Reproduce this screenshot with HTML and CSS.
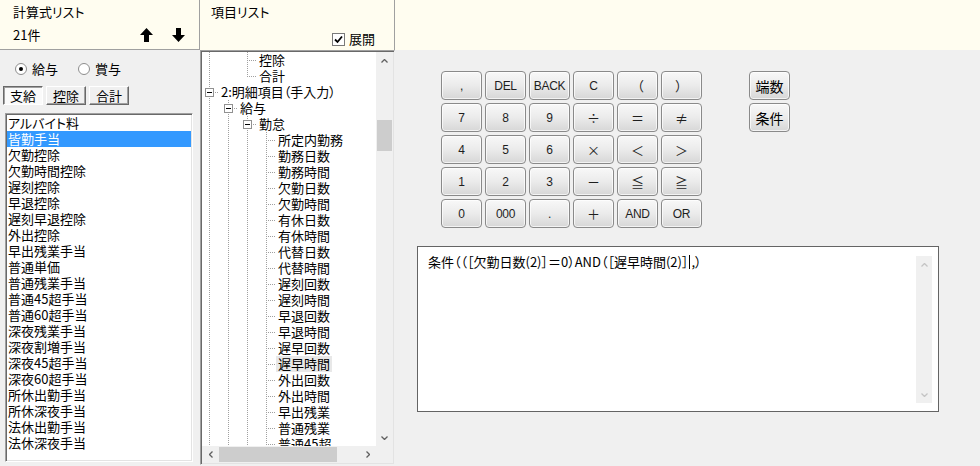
FILE: index.html
```html
<!DOCTYPE html>
<html lang="ja">
	<head>
		<meta charset="UTF-8">
		<title>計算式設定</title>
		<link rel="stylesheet" href="styles.css">
	</head>
	<body>
		<div class="app">
			<div class="hdr hdr-left">
				<div class="hdr-title">計算式リスト</div>
				<div class="hdr-row">
					<span>21件</span>
					<div class="arrows">
						<svg width="13" height="14" viewBox="0 0 13 14"><path d="M6.5 0 L13 7 L9 7 L9 14 L4 14 L4 7 L0 7 Z" fill="#000"/></svg>
						<svg width="13" height="14" viewBox="0 0 13 14"><path d="M6.5 14 L13 7 L9 7 L9 0 L4 0 L4 7 L0 7 Z" fill="#000"/></svg>
					</div>
				</div>
			</div>
			<div class="hdr hdr-mid">
				<div class="hdr-title">項目リスト</div>
				<div class="check-row">
					<label class="check">
						<span class="check-box">
							<svg width="9" height="9" viewBox="0 0 9 9"><path d="M1 4.5 L3.5 7 L8 1.5" fill="none" stroke="#000" stroke-width="1.8"/></svg>
						</span>
						展開
					</label>
				</div>
			</div>
			<div class="hdr hdr-right"></div>

			<div class="left-pane">
				<div class="radios">
					<span class="radio on"><span class="radio-dot"></span>給与</span>
					<span class="radio"><span class="radio-dot"></span>賞与</span>
				</div>
				<div class="tabs">
					<button class="tab pressed">支給</button>
					<button class="tab">控除</button>
					<button class="tab">合計</button>
				</div>
				<ul class="listbox">
					<li>アルバイト料</li>
					<li class="sel">皆勤手当</li>
					<li>欠勤控除</li>
					<li>欠勤時間控除</li>
					<li>遅刻控除</li>
					<li>早退控除</li>
					<li>遅刻早退控除</li>
					<li>外出控除</li>
					<li>早出残業手当</li>
					<li>普通単価</li>
					<li>普通残業手当</li>
					<li>普通45超手当</li>
					<li>普通60超手当</li>
					<li>深夜残業手当</li>
					<li>深夜割増手当</li>
					<li>深夜45超手当</li>
					<li>深夜60超手当</li>
					<li>所休出勤手当</li>
					<li>所休深夜手当</li>
					<li>法休出勤手当</li>
					<li>法休深夜手当</li>
				</ul>
			</div>

			<div class="tree">
				<div class="tree-view">
					<div class="node"><span class="ind v"></span><span class="ind"></span><span class="ind t"></span><span class="label">控除</span></div>
					<div class="node"><span class="ind v"></span><span class="ind"></span><span class="ind l"></span><span class="label">合計</span></div>
					<div class="node"><span class="ind t"><i class="box"></i></span><span class="label">2:明細項目（手入力）</span></div>
					<div class="node"><span class="ind v"></span><span class="ind t"><i class="box"></i></span><span class="label">給与</span></div>
					<div class="node"><span class="ind v"></span><span class="ind v"></span><span class="ind t"><i class="box"></i></span><span class="label">勤怠</span></div>
					<div class="node"><span class="ind v"></span><span class="ind v"></span><span class="ind v"></span><span class="ind t"></span><span class="label">所定内勤務</span></div>
					<div class="node"><span class="ind v"></span><span class="ind v"></span><span class="ind v"></span><span class="ind t"></span><span class="label">勤務日数</span></div>
					<div class="node"><span class="ind v"></span><span class="ind v"></span><span class="ind v"></span><span class="ind t"></span><span class="label">勤務時間</span></div>
					<div class="node"><span class="ind v"></span><span class="ind v"></span><span class="ind v"></span><span class="ind t"></span><span class="label">欠勤日数</span></div>
					<div class="node"><span class="ind v"></span><span class="ind v"></span><span class="ind v"></span><span class="ind t"></span><span class="label">欠勤時間</span></div>
					<div class="node"><span class="ind v"></span><span class="ind v"></span><span class="ind v"></span><span class="ind t"></span><span class="label">有休日数</span></div>
					<div class="node"><span class="ind v"></span><span class="ind v"></span><span class="ind v"></span><span class="ind t"></span><span class="label">有休時間</span></div>
					<div class="node"><span class="ind v"></span><span class="ind v"></span><span class="ind v"></span><span class="ind t"></span><span class="label">代替日数</span></div>
					<div class="node"><span class="ind v"></span><span class="ind v"></span><span class="ind v"></span><span class="ind t"></span><span class="label">代替時間</span></div>
					<div class="node"><span class="ind v"></span><span class="ind v"></span><span class="ind v"></span><span class="ind t"></span><span class="label">遅刻回数</span></div>
					<div class="node"><span class="ind v"></span><span class="ind v"></span><span class="ind v"></span><span class="ind t"></span><span class="label">遅刻時間</span></div>
					<div class="node"><span class="ind v"></span><span class="ind v"></span><span class="ind v"></span><span class="ind t"></span><span class="label">早退回数</span></div>
					<div class="node"><span class="ind v"></span><span class="ind v"></span><span class="ind v"></span><span class="ind t"></span><span class="label">早退時間</span></div>
					<div class="node"><span class="ind v"></span><span class="ind v"></span><span class="ind v"></span><span class="ind t"></span><span class="label">遅早回数</span></div>
					<div class="node"><span class="ind v"></span><span class="ind v"></span><span class="ind v"></span><span class="ind t"></span><span class="label current">遅早時間</span></div>
					<div class="node"><span class="ind v"></span><span class="ind v"></span><span class="ind v"></span><span class="ind t"></span><span class="label">外出回数</span></div>
					<div class="node"><span class="ind v"></span><span class="ind v"></span><span class="ind v"></span><span class="ind t"></span><span class="label">外出時間</span></div>
					<div class="node"><span class="ind v"></span><span class="ind v"></span><span class="ind v"></span><span class="ind t"></span><span class="label">早出残業</span></div>
					<div class="node"><span class="ind v"></span><span class="ind v"></span><span class="ind v"></span><span class="ind t"></span><span class="label">普通残業</span></div>
					<div class="node"><span class="ind v"></span><span class="ind v"></span><span class="ind v"></span><span class="ind t"></span><span class="label">普通45超</span></div>
				</div>
				<div class="vscroll">
					<span class="sb-btn"><svg width="7" height="4" viewBox="0 0 7 4"><path d="M0.5 3.5 L3.5 0.5 L6.5 3.5" fill="none" stroke="#606060" stroke-width="1.3"/></svg></span>
					<div class="sb-track"><div class="sb-thumb"></div></div>
					<span class="sb-btn"><svg width="7" height="4" viewBox="0 0 7 4"><path d="M0.5 0.5 L3.5 3.5 L6.5 0.5" fill="none" stroke="#606060" stroke-width="1.3"/></svg></span>
				</div>
				<div class="hscroll">
					<span class="sb-btn"><svg width="4" height="7" viewBox="0 0 4 7"><path d="M3.5 0.5 L0.5 3.5 L3.5 6.5" fill="none" stroke="#606060" stroke-width="1.3"/></svg></span>
					<div class="sb-track"><div class="sb-thumb"></div></div>
					<span class="sb-btn"><svg width="4" height="7" viewBox="0 0 4 7"><path d="M0.5 0.5 L3.5 3.5 L0.5 6.5" fill="none" stroke="#606060" stroke-width="1.3"/></svg></span>
				</div>
				<div class="corner"></div>
			</div>

			<div class="editor">
				<div class="keys-row">
					<div class="keypad">
						<button class="key">,</button>
						<button class="key">DEL</button>
						<button class="key">BACK</button>
						<button class="key">C</button>
						<button class="key sym">（</button>
						<button class="key sym">）</button>
						<button class="key">7</button>
						<button class="key">8</button>
						<button class="key">9</button>
						<button class="key sym">÷</button>
						<button class="key sym">＝</button>
						<button class="key sym">≠</button>
						<button class="key">4</button>
						<button class="key">5</button>
						<button class="key">6</button>
						<button class="key sym">×</button>
						<button class="key sym">＜</button>
						<button class="key sym">＞</button>
						<button class="key">1</button>
						<button class="key">2</button>
						<button class="key">3</button>
						<button class="key sym">－</button>
						<button class="key sym">≦</button>
						<button class="key sym">≧</button>
						<button class="key">0</button>
						<button class="key">000</button>
						<button class="key">.</button>
						<button class="key sym">＋</button>
						<button class="key">AND</button>
						<button class="key">OR</button>
					</div>
					<div class="side-keys">
						<button class="key jp">端数</button>
						<button class="key jp">条件</button>
					</div>
				</div>
				<div class="formula">
					<div class="formula-text">条件（（［欠勤日数(2)］＝0）AND（［遅早時間(2)］<span class="caret"></span>,）</div>
					<div class="formula-scroll">
						<svg width="7" height="4" viewBox="0 0 7 4"><path d="M0.5 3.5 L3.5 0.5 L6.5 3.5" fill="none" stroke="#c4c4c4" stroke-width="1.3"/></svg>
						<svg width="7" height="4" viewBox="0 0 7 4"><path d="M0.5 0.5 L3.5 3.5 L6.5 0.5" fill="none" stroke="#c4c4c4" stroke-width="1.3"/></svg>
					</div>
				</div>
			</div>
		</div>
	</body>
</html>
```

FILE: styles.css
```css
* {
	box-sizing: border-box;
}

body {
	margin: 0;
	width: 980px;
	height: 466px;
	overflow: hidden;
	background-color: #f0f0f0;
	color: #000;
	font-family: "Noto Sans CJK JP", "Liberation Sans", sans-serif;
	font-size: 13px;
	line-height: 16px;
	font-feature-settings: "palt";
}

.app {
	display: grid;
	grid-template-columns: 200px 195px 585px;
	grid-template-rows: 50px 416px;
}

/* header strip */
.hdr {
	background-color: #fffdf0;
}

.hdr-title {
	height: 16px;
}

.hdr-left {
	padding: 4px 14px 0 13px;
	border-right: 1px solid #a0a0a0;
	border-bottom: 1px solid #a0a0a0;
}

.hdr-row {
	display: flex;
	align-items: center;
	height: 16px;
	margin-top: 7px;
}

.arrows {
	display: flex;
	gap: 19px;
	margin-left: auto;
}

.hdr-mid {
	padding: 4px 19px 0 11px;
	border-right: 1px solid #a0a0a0;
}

.check-row {
	display: flex;
	justify-content: flex-end;
	margin-top: 11px;
}

.check {
	display: flex;
	align-items: center;
	gap: 4px;
}

.check-box {
	display: flex;
	align-items: center;
	justify-content: center;
	width: 13px;
	height: 13px;
	background-color: #fff;
	border: 1px solid #7a7a7a;
}

/* left column */
.left-pane {
	display: flex;
	flex-direction: column;
	padding-top: 11px;
}

.radios {
	display: flex;
	align-items: center;
	height: 16px;
	padding-left: 15px;
}

.radio {
	display: flex;
	align-items: center;
	gap: 5px;
}

.radio + .radio {
	margin-left: 20px;
}

.radio-dot {
	display: flex;
	align-items: center;
	justify-content: center;
	width: 12px;
	height: 12px;
	border-radius: 50%;
	border: 1px solid #8d8d8d;
	background-color: #fff;
}

.radio.on .radio-dot::after {
	content: "";
	width: 4px;
	height: 4px;
	border-radius: 50%;
	background-color: #000;
}

.tabs {
	display: flex;
	gap: 3px;
	margin: 9px 0 0 3px;
}

.tab {
	width: 40px;
	height: 19px;
	padding: 0;
	font: inherit;
	color: #000;
	background-color: #f0f0f0;
	border: 1px solid;
	border-color: #fff #696969 #696969 #fff;
	box-shadow: inset -1px -1px 0 #a0a0a0;
}

.tab.pressed {
	background-color: #fafafa;
	border-color: #696969 #fff #fff #696969;
	box-shadow: inset 1px 1px 0 #a0a0a0;
}

.listbox {
	list-style: none;
	margin: 8px 0 0 5px;
	padding: 1px;
	width: 188px;
	height: 349px;
	background-color: #fff;
	border: 1px solid;
	border-color: #a0a0a0 #fff #fff #a0a0a0;
	box-shadow: inset 1px 1px 0 #696969, inset -1px -1px 0 #e3e3e3;
}

.listbox li {
	height: 16px;
	padding-left: 1px;
	white-space: nowrap;
}

.listbox li.sel {
	background-color: #3399ff;
	color: #fff;
}

/* tree */
.tree {
	display: grid;
	grid-template-columns: 1fr 17px;
	grid-template-rows: 1fr 17px;
	height: 415px;
	padding: 1px;
	background-color: #fff;
	border: 1px solid;
	border-color: #a0a0a0 #f0f0f0 #f0f0f0 #a0a0a0;
	box-shadow: inset 1px 1px 0 #696969, inset -1px -1px 0 #e3e3e3;
}

.tree-view {
	overflow: hidden;
}

.node {
	display: flex;
	height: 16px;
	margin-left: -3px;
	white-space: nowrap;
}

.ind {
	display: block;
	flex: none;
	width: 19px;
	height: 16px;
	background-repeat: no-repeat;
}

.ind.v {
	background-image: repeating-linear-gradient(to bottom, #a0a0a0 0 1px, transparent 1px 2px);
	background-size: 1px 16px;
	background-position: 10px 0;
}

.ind.t {
	background-image: repeating-linear-gradient(to bottom, #a0a0a0 0 1px, transparent 1px 2px), repeating-linear-gradient(to right, #a0a0a0 0 1px, transparent 1px 2px);
	background-size: 1px 16px, 9px 1px;
	background-position: 10px 0, 10px 8px;
}

.ind.l {
	background-image: repeating-linear-gradient(to bottom, #a0a0a0 0 1px, transparent 1px 2px), repeating-linear-gradient(to right, #a0a0a0 0 1px, transparent 1px 2px);
	background-size: 1px 9px, 9px 1px;
	background-position: 10px 0, 10px 8px;
}

.box {
	display: block;
	width: 9px;
	height: 9px;
	margin: 4px 0 0 6px;
	background-color: #fff;
	border: 1px solid #919191;
}

.box::after {
	content: "";
	display: block;
	width: 5px;
	height: 1px;
	margin: 3px 0 0 1px;
	background-color: #000;
}

.label {
	margin-left: 1px;
	padding: 0 2px;
}

.label.current {
	background-color: #e8e8e8;
}

.vscroll,
.hscroll {
	display: flex;
	background-color: #f0f0f0;
}

.vscroll {
	flex-direction: column;
}

.sb-btn {
	display: flex;
	align-items: center;
	justify-content: center;
	flex: none;
	width: 17px;
	height: 17px;
}

.sb-track {
	flex: 1;
}

.vscroll .sb-thumb {
	width: 15px;
	height: 31px;
	margin: 51px 0 0 1px;
	background-color: #cdcdcd;
}

.hscroll .sb-thumb {
	width: 118px;
	height: 15px;
	margin: 1px 0 0 0;
	background-color: #cdcdcd;
}

.corner {
	background-color: #f0f0f0;
}

/* calculator area */
.editor {
	display: flex;
	flex-direction: column;
	padding: 21px 0 0 46px;
}

.keys-row {
	display: flex;
	align-items: flex-start;
	gap: 47px;
}

.keypad {
	display: grid;
	grid-template-columns: repeat(6, 41px);
	grid-auto-rows: 29px;
	gap: 3px;
}

.side-keys {
	display: grid;
	grid-template-columns: 41px;
	grid-auto-rows: 29px;
	gap: 3px;
}

.key {
	padding: 0;
	font-family: "Liberation Sans", "Noto Sans CJK JP", sans-serif;
	font-size: 12px;
	letter-spacing: -0.3px;
	color: #1e1e1e;
	background: linear-gradient(#f8f8f8, #ebebeb 50%, #d7d7d7);
	border: 1px solid #8a8a8a;
	border-radius: 4px;
	box-shadow: inset 0 0 0 1px rgba(255, 255, 255, 0.7);
}

.key.sym,
.key.jp {
	font-family: "Noto Sans CJK JP", sans-serif;
	font-size: 13px;
	letter-spacing: 0;
}

.key.jp {
	font-size: 14px;
	color: #000;
}

.formula {
	display: flex;
	width: 522px;
	height: 166px;
	margin: 18px 0 0 -24px;
	padding: 9px 6px 8px 10px;
	background-color: #fff;
	border: 1px solid #646464;
}

.formula-text {
	flex: 1;
	margin-top: -2px;
	white-space: nowrap;
}

.caret {
	display: inline-block;
	width: 1px;
	height: 14px;
	margin: 0 1px;
	vertical-align: -2px;
	background-color: #000;
}

.formula-scroll {
	display: flex;
	flex-direction: column;
	align-items: center;
	justify-content: space-between;
	width: 16px;
	padding: 7px 0 6px;
	background-color: #f0f0f0;
}
```
